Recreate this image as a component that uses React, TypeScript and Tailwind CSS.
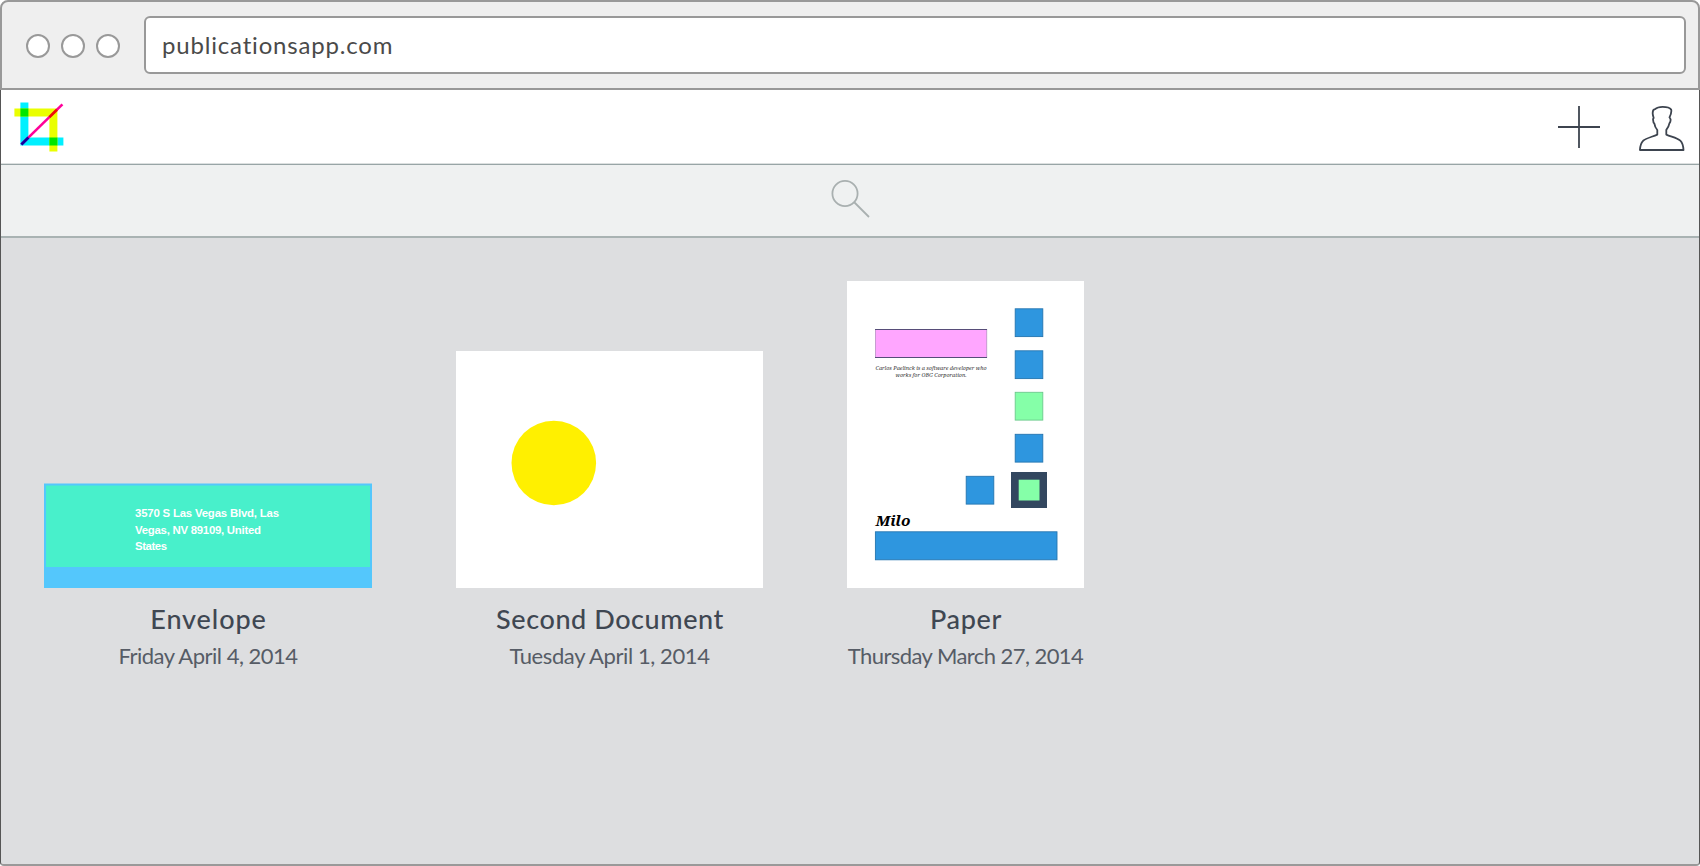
import React from "react";

function Logo() {
  return (
    <svg width="50" height="50" viewBox="13.6 101.6 50 50">
      <path d="M20 102h8v35h35v8H20z" fill="#00f0ff" />
      <path d="M14 108h43v43h-8v-35H14z" fill="#eaff00" />
      <path d="M20 108h8v8h-8zM49 137h8v8h-8z" fill="#00e600" />
      <path d="M21 144L62 104" stroke="#ff0099" strokeWidth="2.6" />
      <path d="M21 144.2L28 137.2" stroke="#1400a0" strokeWidth="2.8" />
      <path d="M49 116.7L56.5 109.4" stroke="#ee1100" strokeWidth="2.6" />
    </svg>
  );
}

function PlusIcon() {
  return (
    <svg width="42" height="42" viewBox="0 0 42 42" fill="none" stroke="#3d444f" strokeWidth="1.8">
      <path d="M21 0v42.5M0 21h42" />
    </svg>
  );
}

function PersonIcon() {
  return (
    <svg width="46" height="46" viewBox="1639.3 105.8 46 46" fill="none" stroke="#3d444f" strokeWidth="1.8" strokeLinejoin="round">
      <path d="M1640.2 149.8H1683.8C1683.6 145.4 1682.6 142.4 1680.6 140.4C1677.4 137.6 1671.6 136.6 1666.6 134.4V129.6C1668.4 127.6 1669.3 125.4 1669.7 123.2C1670.7 122 1671 120.4 1670.8 119.2C1670.8 118.2 1670.1 117.8 1669.8 117.2C1671.3 114 1672 111.4 1671.5 109.4C1670 107.4 1666.8 106.7 1663 106.7C1659.6 106.7 1656.8 107.6 1655.4 109C1653.4 109.2 1652.9 111.2 1653 113.4C1653.1 115 1653.6 116.4 1654 117.8C1653.2 118.4 1653.2 119.2 1653.5 120.2C1653.5 121.8 1654 122.8 1654.7 123.4C1655 125.6 1655.8 127.8 1657.6 129.8V134.4C1652 136.8 1646.4 138 1643.4 140.6C1641.2 142.8 1640.4 146 1640.2 149.8Z" />
    </svg>
  );
}

function SearchIcon() {
  return (
    <svg width="40" height="40" viewBox="0 0 40 40" fill="none" stroke="#a9b0b0" strokeWidth="1.8">
      <circle cx="14" cy="14.5" r="12.6" />
      <path d="M23 23L38 38" />
    </svg>
  );
}

function EnvelopeArt() {
  return (
    <svg width="328" height="105" viewBox="44 483 328 105" className="block">
      <rect x="44" y="483.5" width="328" height="104.5" fill="#54c7fc" />
      <rect x="46" y="485.5" width="324" height="81.5" fill="#48f0cb" />
      <g fill="#fff" fontFamily="'Liberation Sans', sans-serif" fontWeight="700" fontSize="11.4">
        <text x="135" y="516.8" textLength="144">3570 S Las Vegas Blvd, Las</text>
        <text x="135" y="533.6" textLength="126">Vegas, NV 89109, United</text>
        <text x="135" y="550.2" textLength="32">States</text>
      </g>
    </svg>
  );
}

function SecondArt() {
  return (
    <svg width="307" height="237" viewBox="456 351 307 237" className="block bg-white">
      <circle cx="553.8" cy="463" r="42.3" fill="#fff000" />
    </svg>
  );
}

const squares = [
  { x: 1015, y: 308.5, fill: "#2e96df", stroke: "#2475b0" },
  { x: 1015, y: 350.5, fill: "#2e96df", stroke: "#2475b0" },
  { x: 1015, y: 392, fill: "#85ffa8", stroke: "#6cc98c" },
  { x: 1015, y: 434, fill: "#2e96df", stroke: "#2475b0" },
  { x: 966, y: 476, fill: "#2e96df", stroke: "#2475b0" },
];

function PaperArt() {
  return (
    <svg width="237" height="307" viewBox="847 281 237 307" className="block bg-white">
      <rect x="875" y="329" width="112" height="29" fill="#ffa6ff" />
      <path d="M875.5 329v29M986.7 329v29" stroke="#b79ac4" strokeWidth="0.8" />
      <path d="M875 329.5h112M875 357.5h112" stroke="#574d79" />
      {squares.map((s) => (
        <rect key={`${s.x}-${s.y}`} x={s.x + 0.2} y={s.y + 0.3} width="27.6" height="27.8" fill={s.fill} stroke={s.stroke} strokeWidth="0.9" />
      ))}
      <rect x="1011" y="472" width="36" height="36" fill="#33475f" />
      <rect x="1018.7" y="479.7" width="20.8" height="20.8" fill="#85ffa8" />
      <rect x="875.4" y="531.8" width="181.6" height="28" fill="#2e96df" stroke="#2475b0" strokeWidth="0.9" />
      <g fontFamily="'Noto Serif', 'DejaVu Serif', 'Liberation Serif', serif" fontStyle="italic">
        <text x="875.5" y="370" fontSize="5.4" fill="#333" textLength="111" lengthAdjust="spacingAndGlyphs">Carlos Paelinck is a software developer who</text>
        <text x="895.5" y="377.4" fontSize="5.4" fill="#333" textLength="71" lengthAdjust="spacingAndGlyphs">works for OBG Corporation.</text>
        <text x="875.5" y="526" fontSize="14.5" fontWeight="700" fill="#000" textLength="35" lengthAdjust="spacingAndGlyphs">Milo</text>
      </g>
    </svg>
  );
}

type DocumentProps = {
  title: string;
  date: string;
  titleClass: string;
  dateClass: string;
  children: React.ReactNode;
};

function DocumentCard({ title, date, titleClass, dateClass, children }: DocumentProps) {
  return (
    <article className="flex flex-col items-center whitespace-nowrap">
      {children}
      <h2 className={`mt-[11px] pl-px text-[27px] leading-10 font-medium text-[#3f4752] ${titleClass}`}>{title}</h2>
      <p className={`mt-px text-[22px] leading-8 text-[#565c66] ${dateClass}`}>{date}</p>
    </article>
  );
}

export default function App() {
  return (
    <div className="flex h-[866px] w-[1700px] flex-col overflow-hidden bg-white font-[Lato,sans-serif]">
      <header className="flex h-[90px] shrink-0 items-center rounded-t-lg border-2 border-[#999] bg-[#efefef] pr-3 pl-6">
        <div className="flex gap-[11px] pt-0.5">
          <span className="size-6 rounded-full border-2 border-[#999] bg-white" />
          <span className="size-6 rounded-full border-2 border-[#999] bg-white" />
          <span className="size-6 rounded-full border-2 border-[#999] bg-white" />
        </div>
        <div className="ml-6 flex h-[58px] flex-1 items-center rounded-md border-2 border-[#999] bg-white pl-4 text-2xl tracking-[0.82px] text-[#4a4a4a]">
          publicationsapp.com
        </div>
      </header>
      <div className="flex min-h-0 flex-1 flex-col overflow-hidden rounded-b-[4px] border-x border-b-2 border-x-[#555] border-b-[#999] bg-[#dddee0]">
        <nav className="flex h-[73px] shrink-0 items-start bg-white pt-3 pr-3.5 pl-[13px]">
          <Logo />
          <div className="ml-auto flex items-start gap-[39px] pt-1">
            <PlusIcon />
            <PersonIcon />
          </div>
        </nav>
        <div className="flex h-[75px] shrink-0 items-start justify-center border-t border-b-2 border-t-[#dce0e0] border-b-[#a9b3b3] bg-[#eff1f1]">
          <div className="flex h-full w-full justify-center border-t border-[#98a5a6] pt-[14px] pl-0.5">
            <SearchIcon />
          </div>
        </div>
        <main className="flex items-end gap-[84px] pt-[43px] pl-[43px]">
          <DocumentCard title="Envelope" date="Friday April 4, 2014" titleClass="tracking-[0.9px]" dateClass="tracking-[-0.5px]">
            <EnvelopeArt />
          </DocumentCard>
          <DocumentCard title="Second Document" date="Tuesday April 1, 2014" titleClass="tracking-[0.58px]" dateClass="tracking-[-0.4px]">
            <SecondArt />
          </DocumentCard>
          <DocumentCard title="Paper" date="Thursday March 27, 2014" titleClass="tracking-[0.6px]" dateClass="tracking-[-0.56px]">
            <PaperArt />
          </DocumentCard>
        </main>
      </div>
    </div>
  );
}
